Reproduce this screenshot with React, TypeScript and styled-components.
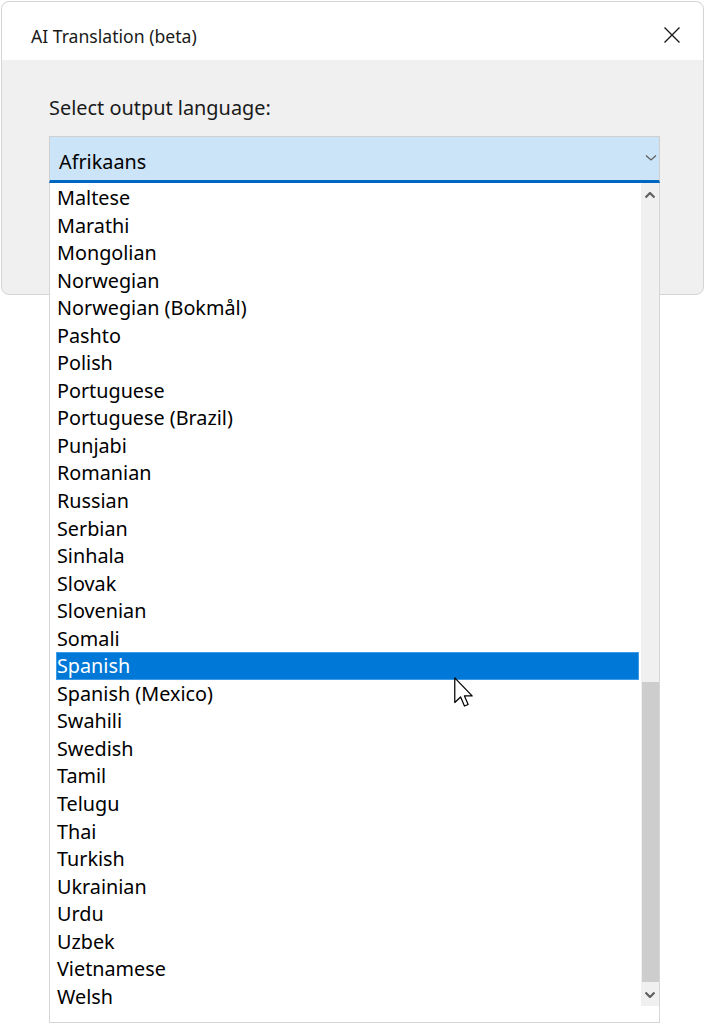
import React from "react";
import styled, { createGlobalStyle } from "styled-components";

const GlobalStyle = createGlobalStyle`
  html, body { margin: 0; padding: 0; background: #ffffff; }
  body { font-family: "Noto Sans", "Open Sans", Arial, sans-serif; color: #000; }
  * { box-sizing: border-box; }
`;

const Page = styled.div`
  position: relative;
  width: 705px;
  height: 1024px;
  padding: 1px;
  overflow: hidden;
`;

const Dialog = styled.div`
  width: 703px;
  height: 294px;
  border: 1px solid #d4d4d4;
  border-radius: 8px;
  display: flex;
  flex-direction: column;
  background: #f0f0f0;
`;

const TitleBar = styled.div`
  height: 58px;
  background: #ffffff;
  border-radius: 8px 8px 0 0;
  display: flex;
  align-items: center;
  justify-content: space-between;
  padding: 10px 20px 0 29px;
  flex-shrink: 0;
`;

const Title = styled.span`
  font-size: 17.6px;
  color: #1a1a1a;
`;

const CloseButton = styled.button`
  border: 0;
  background: transparent;
  padding: 0;
  width: 22px;
  height: 22px;
  display: flex;
  align-items: center;
  justify-content: center;
  margin-bottom: 2px;
`;

const Body = styled.div`
  flex: 1;
  padding: 35px 0 0 47px;
  display: flex;
  flex-direction: column;
`;

const Label = styled.div`
  font-size: 19.9px;
  line-height: 26px;
  color: #1a1a1a;
`;

const ComboWrap = styled.div`
  position: relative;
  margin-top: 15px;
  width: 611px;
`;

const Combo = styled.div`
  height: 47px;
  background: #cce4f7;
  border: 1px solid #cfcfcf;
  border-bottom: 3px solid #0067c0;
  display: flex;
  align-items: center;
  justify-content: space-between;
  padding: 5px 2px 0 9px;
  font-size: 19.8px;
`;

const Chevron = styled.svg`
  margin-bottom: 7px;
`;

const Dropdown = styled.div`
  position: absolute;
  top: 100%;
  left: 0;
  width: 611px;
  height: 840px;
  background: #ffffff;
  border: 1px solid #d6d6d6;
  border-top: 0;
  display: flex;
`;

const Options = styled.ul`
  list-style: none;
  margin: 0;
  padding: 1px 2px 0 6px;
  flex: 1;
`;

const Option = styled.li<{ $selected?: boolean }>`
  height: 27.55px;
  line-height: 27px;
  padding-left: 1px;
  font-size: 19.8px;
  white-space: nowrap;
  color: ${(p) => (p.$selected ? "#ffffff" : "#000000")};
  background: ${(p) => (p.$selected ? "#0078d7" : "transparent")};
  box-shadow: ${(p) => (p.$selected ? "inset 0 0 0 1px #3f9be6" : "none")};
`;

const ScrollBar = styled.div`
  width: 18px;
  height: 823px;
  background: #f0f0f0;
  display: flex;
  flex-direction: column;
`;

const ScrollArrow = styled.div`
  height: 24px;
  display: flex;
  align-items: center;
  justify-content: center;
  flex-shrink: 0;
`;

const Track = styled.div`
  flex: 1;
  display: flex;
  flex-direction: column;
`;

const Thumb = styled.div`
  margin-top: 475px;
  height: 300px;
  margin-left: 1px;
  background: #cdcdcd;
`;

const Cursor = styled.svg`
  position: absolute;
  left: 454px;
  top: 677px;
`;

const languages = [
  "Maltese",
  "Marathi",
  "Mongolian",
  "Norwegian",
  "Norwegian (Bokmål)",
  "Pashto",
  "Polish",
  "Portuguese",
  "Portuguese (Brazil)",
  "Punjabi",
  "Romanian",
  "Russian",
  "Serbian",
  "Sinhala",
  "Slovak",
  "Slovenian",
  "Somali",
  "Spanish",
  "Spanish (Mexico)",
  "Swahili",
  "Swedish",
  "Tamil",
  "Telugu",
  "Thai",
  "Turkish",
  "Ukrainian",
  "Urdu",
  "Uzbek",
  "Vietnamese",
  "Welsh",
];

export default function App() {
  return (
    <>
      <GlobalStyle />
      <Page>
        <Dialog>
          <TitleBar>
            <Title>AI Translation (beta)</Title>
            <CloseButton aria-label="Close">
              <svg width="18" height="18" viewBox="0 0 18 18">
                <path d="M1.5 1.5 L16.5 16.5 M16.5 1.5 L1.5 16.5" stroke="#1a1a1a" strokeWidth="1.4" fill="none" />
              </svg>
            </CloseButton>
          </TitleBar>
          <Body>
            <Label>Select output language:</Label>
            <ComboWrap>
              <Combo>
                <span>Afrikaans</span>
                <Chevron width="12" height="8" viewBox="0 0 12 8">
                  <path d="M1 1.5 L6 6 L11 1.5" stroke="#5f5f5f" strokeWidth="1.3" fill="none" />
                </Chevron>
              </Combo>
              <Dropdown>
                <Options>
                  {languages.map((l) => (
                    <Option key={l} $selected={l === "Spanish"}>
                      {l}
                    </Option>
                  ))}
                </Options>
                <ScrollBar>
                  <ScrollArrow>
                    <svg width="10" height="7" viewBox="0 0 10 7">
                      <path d="M0.5 5.5 L5 1 L9.5 5.5" stroke="#606060" strokeWidth="2.2" fill="none" />
                    </svg>
                  </ScrollArrow>
                  <Track>
                    <Thumb />
                  </Track>
                  <ScrollArrow>
                    <svg width="10" height="7" viewBox="0 0 10 7">
                      <path d="M0.5 1.5 L5 6 L9.5 1.5" stroke="#606060" strokeWidth="2.2" fill="none" />
                    </svg>
                  </ScrollArrow>
                </ScrollBar>
              </Dropdown>
            </ComboWrap>
          </Body>
        </Dialog>
        <Cursor width="20" height="31" viewBox="0 0 13 20">
          <path
            d="M0.5 0.5 L0.5 16.5 L4.3 12.9 L6.8 18.8 L9.2 17.8 L6.8 12.2 L11.8 12.2 Z"
            fill="#ffffff"
            stroke="#000000"
            strokeWidth="0.8"
            strokeLinejoin="round"
          />
        </Cursor>
      </Page>
    </>
  );
}
